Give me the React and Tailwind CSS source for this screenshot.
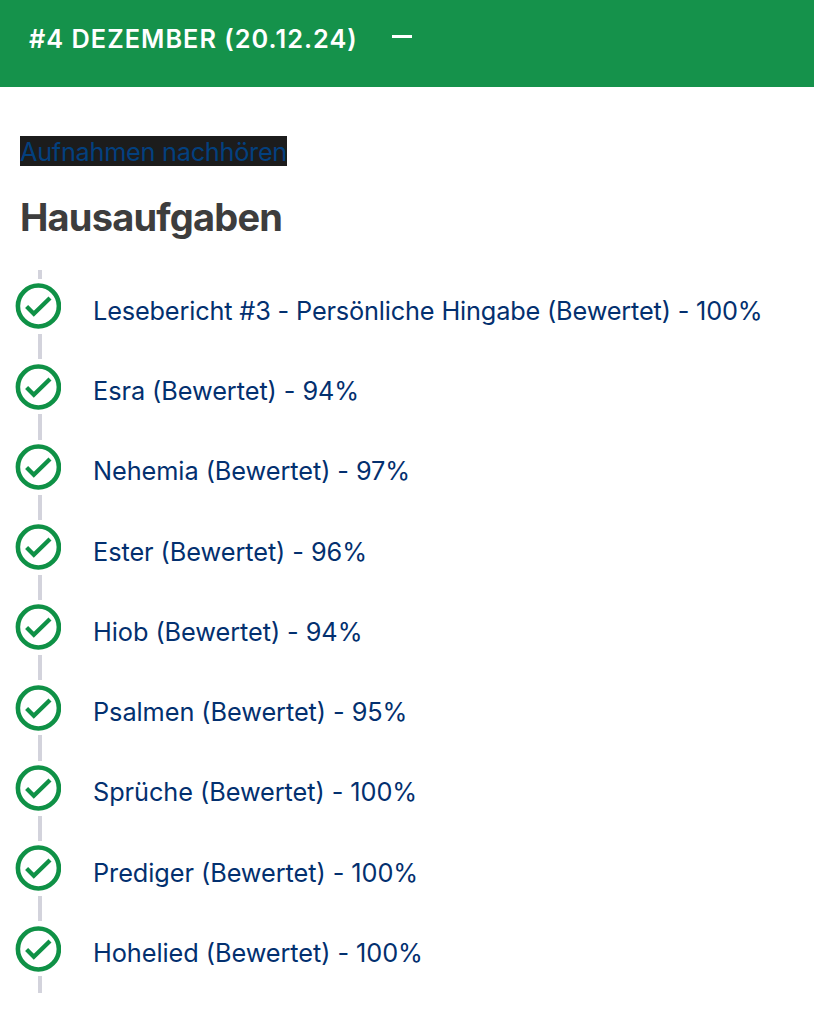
import React from 'react'

const tasks = [
  'Lesebericht #3 - Persönliche Hingabe (Bewertet) - 100%',
  'Esra (Bewertet) - 94%',
  'Nehemia (Bewertet) - 97%',
  'Ester (Bewertet) - 96%',
  'Hiob (Bewertet) - 94%',
  'Psalmen (Bewertet) - 95%',
  'Sprüche (Bewertet) - 100%',
  'Prediger (Bewertet) - 100%',
  'Hohelied (Bewertet) - 100%',
]

function CheckCircle(){
  return (
    <svg className="h-[46px] w-[46px] shrink-0" viewBox="0 0 46 46" fill="none" stroke="#0f9146" aria-hidden="true">
      <circle cx="23.4" cy="23" r="20.5" strokeWidth="4.6" />
      <path d="M11.6 23.6l7.2 7.2L35 15" strokeWidth="4.3" />
    </svg>
  )
}

function TaskRow({ label }){
  return (
    <li className="flex h-[80.3px] tracking-[-0.06px] first:tracking-[-0.16px]">
      <div className="flex w-[46px] flex-col items-center">
        <span className="ml-[3px] h-[9px] w-[4px] shrink-0 bg-[#d3d3dc]" />
        <span className="h-[4.3px] shrink-0" />
        <CheckCircle />
        <span className="h-[4.7px] shrink-0" />
        <span className="ml-[3px] w-[4px] flex-1 bg-[#d3d3dc]" />
      </div>
      <a href="#" className="ml-[32px] mt-[20.7px] h-[40px] whitespace-nowrap text-[25.3px] leading-[40px] text-[#03306f]">{label}</a>
    </li>
  )
}

export default function App(){
  return (
    <div className="h-[1024px] w-[814px] overflow-hidden bg-white font-['Inter',sans-serif]">
      <header className="flex h-[87px] items-start bg-[#15924b] pl-[29px] text-white">
        <h2 className="mt-[19px] whitespace-nowrap text-[25.3px] font-semibold leading-[40px] tracking-[1.02px]">#4 DEZEMBER (20.12.24)</h2>
        <span className="ml-[34px] mt-[35px] h-[3px] w-[20px] bg-white" />
      </header>

      <main>
        <div className="flex pl-[20px] pt-[49px]">
          <a href="#" className="block h-[30px] w-[267px] whitespace-nowrap bg-[#1c1c1c] text-[25.3px] leading-[32px] tracking-[-0.28px] text-[#03407f]">Aufnahmen nachhören</a>
        </div>
        <h1 className="mt-[26px] h-[50px] pl-[20px] text-[38px] font-bold leading-[50px] tracking-[-0.8px] text-[#3d3d3d]">Hausaufgaben</h1>
        <ul className="mt-[28px] pl-[15px]">
          {tasks.map(label => <TaskRow key={label} label={label} />)}
        </ul>
      </main>
    </div>
  )
}
